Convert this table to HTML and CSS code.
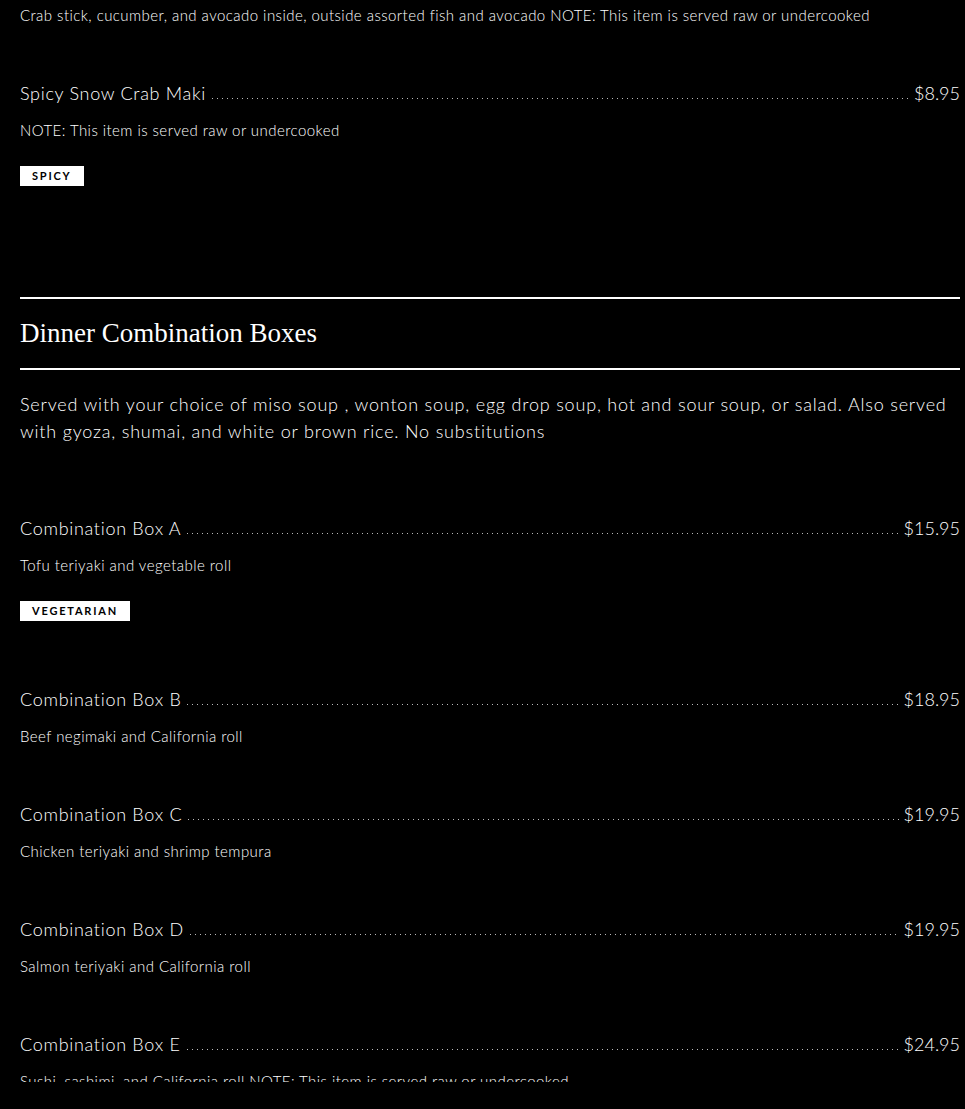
FILE: index.html
```
<!DOCTYPE html>
<html lang="en">

<head>
    <meta charset="UTF-8">
    <meta name="viewport" content="width=device-width, initial-scale=1.0">
    <title>Menu</title>
    <link rel="stylesheet" href="styles.css">
</head>

<body>
    <div class="menu">
        <div class="item">
            <p class="desc">Crab stick, cucumber, and avocado inside, outside assorted fish and avocado NOTE: This item is served raw or undercooked</p>
        </div>
        <div class="item">
            <div class="head">
                <span class="name">Spicy Snow Crab Maki</span>
                <span class="dots"></span>
                <span class="price">$8.95</span>
            </div>
            <p class="desc">NOTE: This item is served raw or undercooked</p>
            <span class="tag">Spicy</span>
        </div>

        <div class="section">
            <h2 class="title">Dinner Combination Boxes</h2>
            <p class="intro">Served with your choice of miso soup , wonton soup, egg drop soup, hot and sour soup, or salad. Also served with gyoza, shumai, and white or brown rice. No substitutions</p>
        </div>

        <div class="item">
            <div class="head">
                <span class="name">Combination Box A</span>
                <span class="dots"></span>
                <span class="price">$15.95</span>
            </div>
            <p class="desc">Tofu teriyaki and vegetable roll</p>
            <span class="tag">Vegetarian</span>
        </div>
        <div class="item">
            <div class="head">
                <span class="name">Combination Box B</span>
                <span class="dots"></span>
                <span class="price">$18.95</span>
            </div>
            <p class="desc">Beef negimaki and California roll</p>
        </div>
        <div class="item">
            <div class="head">
                <span class="name">Combination Box C</span>
                <span class="dots"></span>
                <span class="price">$19.95</span>
            </div>
            <p class="desc">Chicken teriyaki and shrimp tempura</p>
        </div>
        <div class="item">
            <div class="head">
                <span class="name">Combination Box D</span>
                <span class="dots"></span>
                <span class="price">$19.95</span>
            </div>
            <p class="desc">Salmon teriyaki and California roll</p>
        </div>
        <div class="item">
            <div class="head">
                <span class="name">Combination Box E</span>
                <span class="dots"></span>
                <span class="price">$24.95</span>
            </div>
            <p class="desc">Sushi, sashimi, and California roll NOTE: This item is served raw or undercooked</p>
        </div>
    </div>
</body>

</html>
```

FILE: styles.css
```
body {
    margin: 0;
    background-color: #000;
    color: #fff;
    font-family: Lato, "Liberation Sans", sans-serif;
    font-weight: 300;
}

p {
    margin: 0;
}

.menu {
    height: 1077px;
    padding: 5px 5px 0 20px;
    overflow: hidden;
}

.item {
    display: flex;
    flex-direction: column;
    align-items: flex-start;
    margin-bottom: 56px;
}

.head {
    display: flex;
    align-items: flex-end;
    width: 100%;
    font-size: 18px;
    line-height: 24px;
    letter-spacing: 0.7px;
}

.price {
    letter-spacing: 0;
}

.dots {
    flex: 1;
    height: 1px;
    margin: 0 4px 6px 6px;
    background-image: linear-gradient(to right, #bbb 1px, transparent 1px);
    background-size: 5px 1px;
}

.desc {
    margin-top: 15px;
    font-size: 15px;
    line-height: 20px;
    letter-spacing: 0.45px;
}

.item>.desc:first-child {
    margin-top: 0;
}

.tag {
    margin-top: 26px;
    margin-bottom: 10px;
    padding: 0 12px;
    height: 20px;
    line-height: 20px;
    background-color: #fff;
    color: #000;
    font-size: 11px;
    font-weight: bold;
    letter-spacing: 1.8px;
    text-transform: uppercase;
}

.section {
    padding-top: 45px;
    margin-bottom: 71px;
}

.title {
    margin: 0;
    padding: 16px 0 17px;
    border-top: 2px solid #fff;
    border-bottom: 2px solid #fff;
    font-family: "Liberation Serif", serif;
    font-size: 27px;
    line-height: 36px;
    font-weight: normal;
}

.intro {
    margin-top: 21px;
    font-size: 18px;
    line-height: 27px;
    letter-spacing: 0.8px;
}
```
